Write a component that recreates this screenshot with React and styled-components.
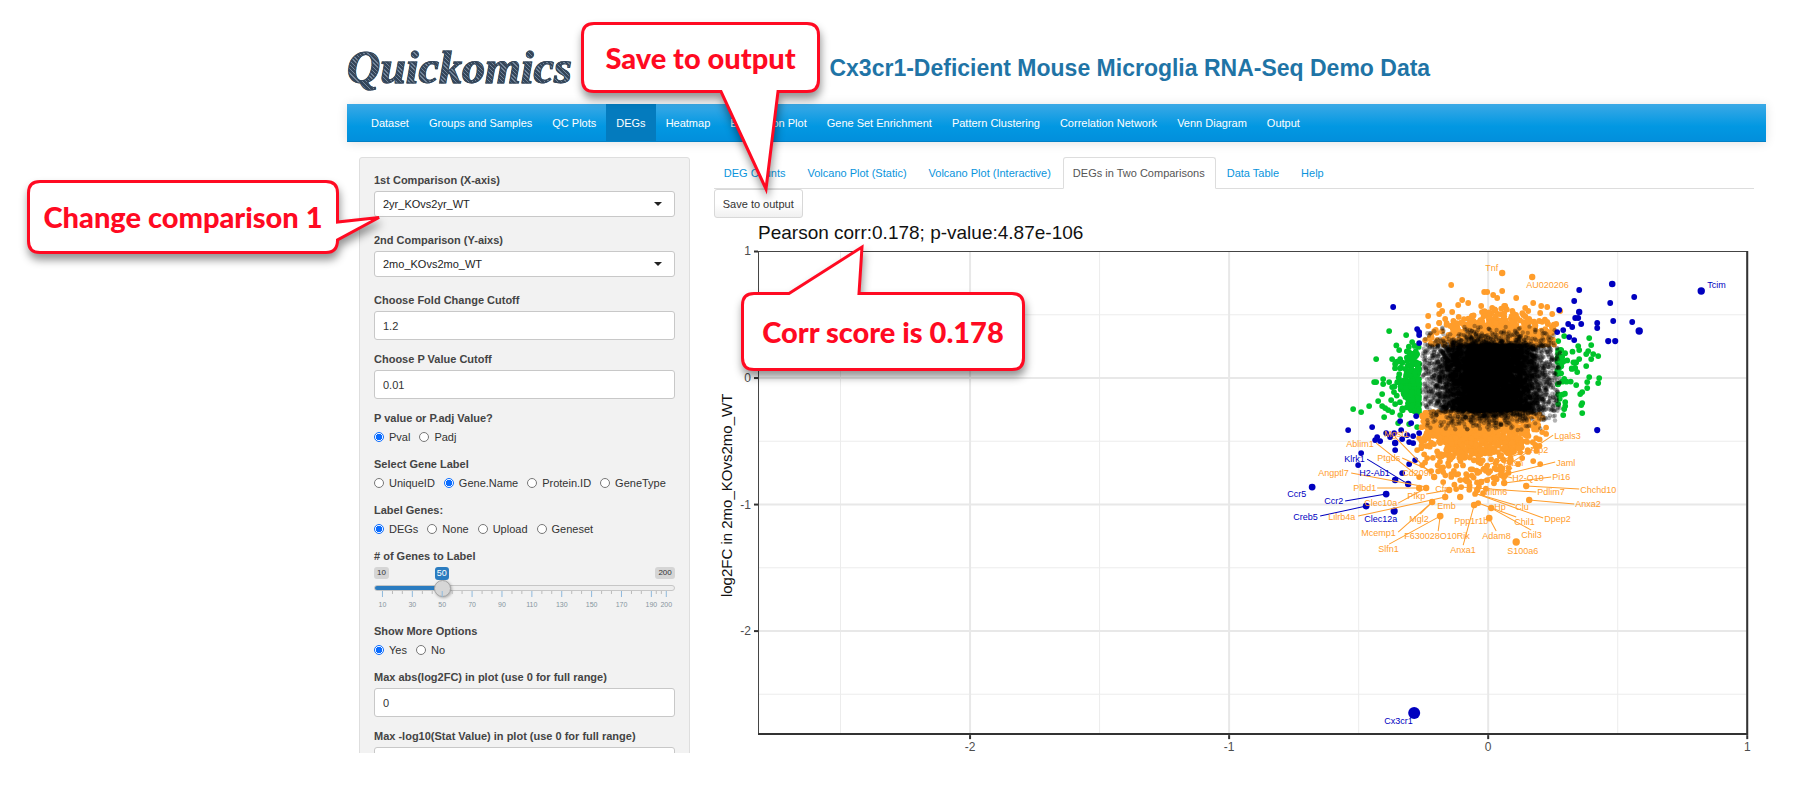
import React, { useState } from "react";
import styled, { createGlobalStyle, css } from "styled-components";

const Global = createGlobalStyle`
  *, *::before, *::after { box-sizing: border-box; }
  body {
    margin: 0;
    background: #fff;
    color: #333;
    font: 11px/16px "Liberation Sans", Arial, sans-serif;
  }
  button, input, select { font: inherit; color: inherit; margin: 0; }
`;

const Page = styled.div`
  position: relative;
`;

const AppFrame = styled.div`
  height: calc(100vh - 39px);
  overflow: hidden;
  padding: 0 28px 0 347px;
`;

const Header = styled.header`
  display: grid;
  grid-template-columns: 34fr 66fr;
  align-items: center;
  height: 104px;
  padding-top: 32px;
`;

const Logo = styled.div`
  font: italic 700 46px/72px "Liberation Serif", "Times New Roman", serif;
  color: transparent;
  background: repeating-linear-gradient(45deg, #34465a 0 2px, #75869a 2px 3px);
  background-clip: text;
  -webkit-background-clip: text;
  -webkit-text-stroke: 1px #34465a;
  justify-self: start;
  padding-bottom: 4px;
`;

const Title = styled.h1`
  margin: 0;
  padding-bottom: 4px;
  font-size: 23px;
  line-height: 32px;
  color: #1f74a6;
  white-space: nowrap;
`;

const NavBar = styled.nav`
  display: flex;
  height: 38px;
  padding-left: 14px;
  background: linear-gradient(#3ba9e6, #0298e2 60%, #028fdc);
  border-bottom: 1px solid #0281c6;
  box-shadow: 0 1px 10px rgba(0, 0, 0, 0.12);
`;

const NavLink = styled.a`
  padding: 11px 10px;
  color: #fff;
  text-decoration: none;
  white-space: nowrap;
  background: ${(p) => (p.$active ? "#047bbe" : "none")};
`;

const Body = styled.div`
  display: grid;
  grid-template-columns: 1fr 3fr;
  margin-top: 15px;
`;

const Column = styled.div`
  padding: 0 12px;
  min-width: 0;
`;

const Well = styled.form`
  padding: 14px;
  background: #f2f2f2;
  border: 1px solid #dedede;
  border-radius: 3px;
`;

const Field = styled.div`
  margin-bottom: ${(p) => p.$gap || 11}px;
`;

const labelText = css`
  display: block;
  padding: 0;
  font-weight: 700;
  line-height: 16px;
  color: #444;
`;

const Label = styled.label`
  ${labelText}
  margin-bottom: 3px;
`;

const Legend = styled.legend`
  ${labelText}
`;

const boxLook = css`
  display: block;
  width: 100%;
  background: #fff;
  border: 1px solid #c8c8c8;
  border-radius: 3px;
  padding: 0 8px;
`;

const TextInput = styled.input`
  ${boxLook}
  height: 29px;
`;

const SelectBox = styled.div`
  position: relative;
  &::after {
    content: "";
    position: absolute;
    right: 13px;
    top: 11px;
    border: 4px solid transparent;
    border-top-color: #222;
    border-bottom: 0;
    pointer-events: none;
  }
`;

const Select = styled.select`
  ${boxLook}
  height: 26px;
  appearance: none;
  color: #222;
`;

const RadioSet = styled.fieldset`
  border: 0;
  margin: 0 0 8px;
  padding: 0;
`;

const RadioRow = styled.div`
  display: flex;
  align-items: center;
  gap: 9px;
  height: 22px;
`;

const RadioLabel = styled.label`
  display: flex;
  align-items: center;
  gap: 5px;
  white-space: nowrap;
`;

const Radio = styled.input`
  appearance: none;
  width: 10px;
  height: 10px;
  border: 1px solid #777;
  border-radius: 50%;
  background: #fff;
  &:checked {
    border-color: #0a6cff;
    background: radial-gradient(circle, #0a6cff 0 3px, #fff 3px);
  }
`;

const SliderField = styled.div`
  height: 75px;
`;

const Bubbles = styled.div`
  position: relative;
  display: flex;
  justify-content: space-between;
  height: 18px;
`;

const Bubble = styled.span`
  height: 12px;
  padding: 0 3px;
  border-radius: 3px;
  background: #d5d5d5;
  font-size: 8px;
  line-height: 12px;
`;

const ValueBubble = styled.output`
  position: absolute;
  top: 0;
  height: 13px;
  padding: 0 2px;
  transform: translateX(-50%);
  border-radius: 3px;
  background: #2b7cc0;
  color: #fff;
  font-size: 9px;
  line-height: 13px;
`;

const Range = styled.input`
  display: block;
  appearance: none;
  width: 100%;
  height: 6px;
  border: 1px solid #c6c6c6;
  border-radius: 4px;
  &::-webkit-slider-thumb {
    appearance: none;
    width: 17px;
    height: 17px;
    border: 1px solid #a5a5a5;
    border-radius: 50%;
    background: #d6d6d6;
    box-shadow: 1px 1px 3px rgba(0, 0, 0, 0.3);
  }
`;

const Ticks = styled.svg`
  display: block;
  width: 100%;
  height: 6px;
`;

const TickLabels = styled.div`
  display: grid;
  grid-template-columns: repeat(20, 1fr);
  margin: 0 1px;
  font-size: 7px;
  line-height: 16px;
  color: #8595a0;
`;

const TickLabel = styled.span`
  grid-column: ${(p) => p.$col};
  justify-self: center;
`;

const TabBar = styled.div`
  display: flex;
  height: 32px;
  border-bottom: 1px solid #ddd;
`;

const Tab = styled.a`
  height: 32px;
  margin-right: 1px;
  padding: 7px 10px 7px 9px;
  border: 1px solid transparent;
  border-radius: 3px 3px 0 0;
  color: #0a94dc;
  text-decoration: none;
  white-space: nowrap;
  ${(p) =>
    p.$active &&
    css`
      color: #555;
      background: #fff;
      border-color: #ddd #ddd #fff;
    `}
`;

const SaveButton = styled.button`
  display: block;
  height: 29px;
  padding: 0 8px;
  border: 1px solid #d8d8d8;
  border-radius: 3px;
  background: linear-gradient(#fff, #fff 50%, #f0f0f0);
`;

const Plot = styled.svg`
  display: block;
  width: 100%;
  font-family: "Liberation Sans", Arial, sans-serif;
`;

const CalloutBox = styled.div`
  position: absolute;
  left: ${(p) => p.$x}px;
  top: ${(p) => p.$y}px;
  width: ${(p) => p.$w}px;
  height: ${(p) => p.$h}px;
  display: flex;
  align-items: center;
  justify-content: center;
  font: 900 29px/36px Lato, Carlito, Calibri, sans-serif;
  color: #ff0a22;
  white-space: nowrap;
  pointer-events: none;
`;

const CalloutShape = styled.svg`
  position: absolute;
  inset: 0;
  overflow: visible;
  filter: drop-shadow(1px 6px 4px rgba(0, 0, 0, 0.42));
`;

const CalloutText = styled.span`
  position: relative;
`;

const NAV = ["Dataset", "Groups and Samples", "QC Plots", "DEGs", "Heatmap", "Expression Plot",
  "Gene Set Enrichment", "Pattern Clustering", "Correlation Network", "Venn Diagram", "Output"];

const TABS = ["DEG Counts", "Volcano Plot (Static)", "Volcano Plot (Interactive)",
  "DEGs in Two Comparisons", "Data Table", "Help"];

function SelectField({ id, label, value }) {
  return (
    <Field $gap={15}>
      <Label htmlFor={id}>{label}</Label>
      <SelectBox>
        <Select id={id} defaultValue={value}>
          <option>{value}</option>
        </Select>
      </SelectBox>
    </Field>
  );
}

function TextField({ id, label, value }) {
  return (
    <Field>
      <Label htmlFor={id}>{label}</Label>
      <TextInput id={id} type="text" defaultValue={value} />
    </Field>
  );
}

function RadioField({ name, label, options, value }) {
  return (
    <RadioSet>
      <Legend>{label}</Legend>
      <RadioRow>
        {options.map((o) => (
          <RadioLabel key={o}>
            <Radio type="radio" name={name} value={o} defaultChecked={o === value} />
            {o}
          </RadioLabel>
        ))}
      </RadioRow>
    </RadioSet>
  );
}

const MAJOR = [10, 30, 50, 70, 90, 110, 130, 150, 170, 190, 200];
const MINOR = [];
for (let v = 10; v < 190; v += 20) MINOR.push(v + 6.7, v + 13.3);
MINOR.push(193.3, 196.7);
const tickX = (v) => 8.5 + ((v - 10) / 190) * 285;

function GeneSlider() {
  const [value, setValue] = useState(50);
  const part = (value - 10) / 190;
  const at = `calc(8px + (100% - 17px) * ${part})`;
  return (
    <SliderField>
      <Label htmlFor="genes"># of Genes to Label</Label>
      <Bubbles>
        <Bubble>10</Bubble>
        <ValueBubble htmlFor="genes" style={{ left: at }}>{value}</ValueBubble>
        <Bubble>200</Bubble>
      </Bubbles>
      <Range
        id="genes"
        type="range"
        min="10"
        max="200"
        value={value}
        onChange={(e) => setValue(Number(e.target.value))}
        style={{ background: `linear-gradient(90deg, #2b7cc0 ${at}, #eee ${at})` }}
      />
      <Ticks viewBox="0 0 302 6" preserveAspectRatio="none" aria-hidden="true">
        {MAJOR.map((v) => <path key={v} d={`M${tickX(v)} 0v6`} stroke="#8fb9dc" />)}
        {MINOR.map((v) => <path key={v} d={`M${tickX(v)} 0v3`} stroke="#bbb" />)}
      </Ticks>
      <TickLabels>
        {MAJOR.map((v) => <TickLabel key={v} $col={v / 10}>{v}</TickLabel>)}
      </TickLabels>
    </SliderField>
  );
}

const ORANGE = "#ff9d2b";
const BLUE = "#0000bf";
const GREEN = "#00c52b";

/* Repeatable random numbers, so that the cloud is the same on each render. */
let seed = 20240607;
const rnd = () => {
  seed = (seed * 1664525 + 1013904223) % 4294967296;
  return seed / 4294967296;
};
const gauss = () => Math.sqrt(-2 * Math.log(1 - rnd())) * Math.cos(2 * Math.PI * rnd());
const expo = (m) => -m * Math.log(1 - rnd());

const BLUE_DOTS = [
  [1612, 284, 3.3], [1579, 290], [1574, 301], [1610, 303], [1634, 297], [1701, 291, 3.7], [1559, 310],
  [1579, 312, 3.2], [1575, 318], [1578, 318], [1597, 323], [1597, 328], [1613, 321], [1632, 322],
  [1639, 331, 3.7], [1581, 324], [1568, 324], [1572, 327], [1563, 330], [1557, 332], [1569, 337],
  [1574, 340], [1608, 341, 3.1], [1615, 341, 3.1], [1597, 430, 3.1], [1393, 307], [1417, 329],
  [1419, 335], [1419, 343], [1419, 332], [1348, 430], [1372, 427], [1377, 437], [1375, 440],
  [1380, 441], [1386, 433], [1390, 437], [1395, 443, 3.2], [1395, 450], [1394, 433], [1402, 439],
  [1400, 421], [1411, 423], [1416, 416], [1419, 433], [1413, 443], [1409, 442], [1407, 435],
  [1401, 430], [1413, 436], [1415, 460], [1409, 464], [1361, 453], [1358, 465], [1402, 473],
  [1395, 480, 3.2], [1408, 484, 3.2], [1312, 487, 3.4], [1386, 494, 3.4], [1366, 506, 3.4],
  [1394, 511, 3.6], [1414, 713, 6],
];

const GREEN_DOTS = [
  [1589, 338], [1591, 345], [1578, 346], [1579, 350], [1588, 351], [1586, 354], [1593, 354], [1598, 356],
  [1591, 359], [1579, 359], [1586, 366], [1575, 368], [1577, 372], [1589, 377], [1599, 378], [1598, 383],
  [1587, 382], [1587, 388], [1576, 385], [1582, 392], [1580, 394], [1582, 403], [1581, 405], [1582, 413],
  [1565, 402], [1565, 406], [1564, 409], [1563, 415], [1558, 404], [1564, 336], [1558, 341],
  [1389, 331], [1406, 335], [1412, 342], [1399, 350], [1376, 359], [1392, 359], [1400, 359], [1395, 364],
  [1383, 379], [1374, 382], [1376, 382], [1383, 384], [1382, 394], [1378, 401], [1369, 406], [1361, 412],
  [1353, 409], [1384, 417], [1382, 406], [1385, 408], [1388, 410], [1392, 412], [1391, 400], [1395, 404],
  [1402, 410], [1400, 415], [1398, 423], [1409, 424], [1417, 427], [1389, 382], [1392, 387],
];
for (let i = 0; i < 220; i++) {
  const y = 382 + gauss() * 17;
  const d = expo(9);
  if (y > 345 && y < 414 && d < 29) GREEN_DOTS.push([1419 - d, y]);
}
for (let i = 0; i < 60; i++) {
  const y = 368 + gauss() * 17;
  const d = expo(8);
  if (y > 345 && y < 400 && d < 22) GREEN_DOTS.push([1557 + d, y]);
}

const ORANGE_DOTS = [
  [1451, 285], [1502, 273, 3.2], [1502, 291], [1484, 292], [1487, 292], [1493, 295], [1497, 298],
  [1462, 300], [1458, 305], [1439, 305], [1481, 306], [1505, 306], [1468, 303], [1492, 308], [1442, 311],
  [1439, 314], [1452, 312], [1428, 316], [1445, 319], [1428, 326], [1439, 323], [1434, 331], [1431, 335],
  [1443, 342], [1425, 340], [1433, 344], [1532, 277, 3.2], [1516, 298], [1533, 303], [1541, 306],
  [1547, 307], [1525, 308], [1528, 311], [1540, 313], [1552, 314], [1560, 311], [1529, 319], [1539, 321],
  [1547, 322], [1556, 324], [1545, 329], [1504, 306], [1538, 420], [1538, 425], [1542, 432], [1536, 438],
  [1526, 441], [1527, 430], [1516, 443], [1522, 458], [1533, 461], [1540, 464], [1501, 455], [1511, 453],
  [1526, 486, 3.2], [1529, 500, 3.2], [1491, 508, 3.2], [1489, 518, 3.4], [1516, 542, 3.7], [1504, 483, 3.2],
  [1501, 475, 3.2], [1478, 503], [1474, 505, 3.3], [1490, 471], [1481, 482, 3.2], [1477, 490, 3.2],
  [1460, 497, 3.2], [1419, 488, 3.2], [1426, 488, 3.2], [1432, 502, 3.2], [1440, 516, 3.4], [1419, 477],
  [1422, 465], [1431, 471], [1434, 477, 3.2], [1443, 482], [1448, 463], [1427, 458], [1440, 443],
  [1439, 456], [1426, 446], [1419, 438], [1430, 428], [1449, 490, 3.2], [1445, 497, 3.2], [1443, 472],
  [1417, 450], [1461, 487], [1458, 474], [1460, 480], [1456, 489], [1466, 474],
];
for (let i = 0; i < 950; i++) {
  const x = 1498 + gauss() * 26;
  const y = 345 - expo(10);
  const roof = 304 + Math.abs(x - 1500) * 0.3;
  if (x > 1424 && x < 1554 && y > roof) ORANGE_DOTS.push([x, y]);
}
for (let i = 0; i < 1350; i++) {
  const x = 1477 + gauss() * 28;
  const y = 412 + expo(18);
  const floor = 500 - Math.abs(x - 1474) * 0.75;
  if (x > 1421 && x < 1546 && y < floor) ORANGE_DOTS.push([x, y]);
}

const BLACK_DOTS = [];
while (BLACK_DOTS.length < 8500) {
  const x = 1490 + gauss() * 27;
  const y = 345 + rnd() * 66;
  if (x > 1422 && x < 1560) BLACK_DOTS.push([x, y]);
}
for (let i = 0; i < 750; i++) {
  const up = rnd() < 0.5;
  const x = (up ? 1492 : 1486) + gauss() * 32;
  const d = expo(7);
  if (x > 1422 && x < 1556 && d < 19) BLACK_DOTS.push([x, up ? 345 - d : 411 + d]);
}

/* Each gene: name, colour, text start x, baseline y, then the leader line if there is one. */
const GENES = [
  ["Tnf", ORANGE, 1485, 271], ["AU020206", ORANGE, 1526, 288], ["Tcim", BLUE, 1707, 288],
  ["Cx3cr1", BLUE, 1384, 724], ["Ccr5", BLUE, 1287, 497],
  ["Ccr2", BLUE, 1324, 504, [1345, 501, 1386, 494]],
  ["Creb5", BLUE, 1293, 520, [1320, 516, 1366, 506]],
  ["Klrk1", BLUE, 1344, 462, [1367, 459, 1408, 484]],
  ["H2-Ab1", BLUE, 1359, 476], ["Clec12a", BLUE, 1364, 522],
  ["Mgst1", ORANGE, 1384, 437, [1395, 437, 1434, 477]],
  ["Ablim1", ORANGE, 1346, 447, [1376, 443, 1419, 477]],
  ["Ptgds", ORANGE, 1377, 461, [1402, 458, 1431, 471]],
  ["Angptl7", ORANGE, 1318, 476, [1351, 473, 1426, 487]],
  ["Plbd1", ORANGE, 1353, 491, [1377, 488, 1419, 488]],
  ["Cd209f", ORANGE, 1402, 476],
  ["Clec10a", ORANGE, 1364, 506, [1398, 503, 1426, 488]],
  ["Lilrb4a", ORANGE, 1328, 520, [1358, 516, 1445, 497]],
  ["Pfkp", ORANGE, 1407, 499, [1426, 494, 1449, 490]],
  ["Mgl2", ORANGE, 1409, 522, [1420, 514, 1432, 502]],
  ["Mcemp1", ORANGE, 1361, 536, [1398, 532, 1432, 502]],
  ["F630028O10Rik", ORANGE, 1404, 539, [1438, 531, 1440, 516]],
  ["Slfn1", ORANGE, 1378, 552, [1389, 544, 1440, 516]],
  ["Emb", ORANGE, 1437, 509], ["Cfp", ORANGE, 1435, 492],
  ["Ppp1r1b", ORANGE, 1454, 524],
  ["Anxa1", ORANGE, 1450, 553, [1463, 545, 1474, 505]],
  ["Lgals3", ORANGE, 1554, 439, [1553, 435, 1503, 468]],
  ["Plp2", ORANGE, 1530, 453, [1530, 450, 1482, 467]],
  ["Jaml", ORANGE, 1556, 466, [1555, 462, 1481, 480]],
  ["Fasn", ORANGE, 1503, 466, [1512, 468, 1474, 484]],
  ["H2-Q10", ORANGE, 1512, 481, [1512, 478, 1501, 475]],
  ["Pi16", ORANGE, 1552, 480, [1551, 477, 1504, 483]],
  ["Chchd10", ORANGE, 1580, 493, [1579, 489, 1526, 486]],
  ["Pdlim7", ORANGE, 1537, 495, [1536, 492, 1460, 487]],
  ["Ifitm6", ORANGE, 1485, 495],
  ["Anxa2", ORANGE, 1575, 507, [1574, 504, 1529, 500]],
  ["Hp", ORANGE, 1494, 510],
  ["Clu", ORANGE, 1515, 510, [1515, 505, 1477, 494]],
  ["Dpep2", ORANGE, 1544, 522, [1543, 518, 1477, 494]],
  ["Chil1", ORANGE, 1514, 525, [1516, 517, 1478, 503]],
  ["Chil3", ORANGE, 1521, 538, [1531, 530, 1491, 508]],
  ["Adam8", ORANGE, 1482, 539, [1496, 531, 1489, 518]],
  ["S100a6", ORANGE, 1507, 554],
];

const sx = (v) => 1488 + v * 259;
const sy = (v) => 378 - v * 126.5;

const Dots = React.memo(function Dots({ data, fill, opacity = 1, r = 2.9 }) {
  return (
    <g fill={fill} fillOpacity={opacity}>
      {data.map(([x, y, own], i) => (
        <circle key={i} cx={x.toFixed(1)} cy={y.toFixed(1)} r={own || r} />
      ))}
    </g>
  );
});

function ScatterPlot() {
  return (
    <Plot viewBox="714 218 1040 536" role="img" aria-label="DEGs in two comparisons">
      <text x="758" y="239" fontSize="19" fill="#111">Pearson corr:0.178; p-value:4.87e-106</text>
      <text transform="translate(732 597) rotate(-90)" fontSize="15" fill="#111">log2FC in 2mo_KOvs2mo_WT</text>
      <g stroke="#ececec">
        {[-2.5, -1.5, -0.5, 0.5].map((v) => <path key={v} d={`M${sx(v)} 252V734`} />)}
        {[0.5, -0.5, -1.5, -2.5].map((v) => <path key={v} d={`M759 ${sy(v)}H1746`} />)}
      </g>
      <g stroke="#e8e8e8" strokeWidth="2">
        {[-2, -1, 0].map((v) => <path key={v} d={`M${sx(v)} 252V734`} />)}
        {[0, -1, -2].map((v) => <path key={v} d={`M759 ${sy(v)}H1746`} />)}
      </g>
      <Dots data={GREEN_DOTS} fill={GREEN} />
      <Dots data={ORANGE_DOTS} fill={ORANGE} />
      <Dots data={BLUE_DOTS} fill={BLUE} />
      <Dots data={BLACK_DOTS} fill="#000" opacity={0.3} r={2.2} />
      <g strokeWidth="1">
        {GENES.filter((g) => g[4]).map(([name, color, , , l]) => (
          <path key={name} d={`M${l[0]} ${l[1]}L${l[2]} ${l[3]}`} stroke={color} />
        ))}
      </g>
      <g fontSize="9">
        {GENES.map(([name, color, x, y]) => <text key={name} x={x} y={y} fill={color}>{name}</text>)}
      </g>
      <path d="M758.500 251.500H1747V734H758.500Z" fill="none" stroke="#444" strokeWidth="1" />
      <path d="M758 734H1747V251" fill="none" stroke="#333" strokeWidth="2" />
      <g stroke="#333" strokeWidth="2">
        {[1, 0, -1, -2].map((v) => <path key={v} d={`M754 ${sy(v)}h4`} />)}
        {[-2, -1, 0, 1].map((v) => <path key={v} d={`M${sx(v)} 735v4`} />)}
      </g>
      <g fontSize="12" fill="#4d4d4d">
        {[1, 0, -1, -2].map((v) => <text key={v} x="751" y={sy(v) + 4} textAnchor="end">{v}</text>)}
        {[-2, -1, 0, 1].map((v) => <text key={v} x={sx(v)} y="751" textAnchor="middle">{v}</text>)}
      </g>
    </Plot>
  );
}

function Callout({ x, y, w, h, path, children }) {
  return (
    <CalloutBox $x={x} $y={y} $w={w} $h={h}>
      <CalloutShape width={w} height={h} aria-hidden="true">
        <path d={path} fill="#fff" stroke="#ff0a22" strokeWidth="3" />
      </CalloutShape>
      <CalloutText>{children}</CalloutText>
    </CalloutBox>
  );
}

export default function App() {
  return (
    <Page>
      <Global />
      <AppFrame>
        <Header>
          <Logo>Quickomics</Logo>
          <Title>Cx3cr1-Deficient Mouse Microglia RNA-Seq Demo Data</Title>
        </Header>
        <NavBar>
          {NAV.map((n) => <NavLink key={n} href="#" $active={n === "DEGs"}>{n}</NavLink>)}
        </NavBar>
        <Body>
          <Column>
            <Well>
              <SelectField id="cmp1" label="1st Comparison (X-axis)" value="2yr_KOvs2yr_WT" />
              <SelectField id="cmp2" label="2nd Comparison (Y-aixs)" value="2mo_KOvs2mo_WT" />
              <TextField id="fc" label="Choose Fold Change Cutoff" value="1.2" />
              <TextField id="pv" label="Choose P Value Cutoff" value="0.01" />
              <RadioField name="ptype" label="P value or P.adj Value?" options={["Pval", "Padj"]} value="Pval" />
              <RadioField name="glabel" label="Select Gene Label" value="Gene.Name"
                options={["UniqueID", "Gene.Name", "Protein.ID", "GeneType"]} />
              <RadioField name="lgenes" label="Label Genes:" value="DEGs"
                options={["DEGs", "None", "Upload", "Geneset"]} />
              <GeneSlider />
              <RadioField name="more" label="Show More Options" options={["Yes", "No"]} value="Yes" />
              <TextField id="maxfc" label="Max abs(log2FC) in plot (use 0 for full range)" value="0" />
              <TextField id="maxstat" label="Max -log10(Stat Value) in plot (use 0 for full range)" value="" />
            </Well>
          </Column>
          <Column>
            <TabBar>
              {TABS.map((t) => (
                <Tab key={t} href="#" $active={t === "DEGs in Two Comparisons"}>{t}</Tab>
              ))}
            </TabBar>
            <SaveButton type="button">Save to output</SaveButton>
            <ScatterPlot />
          </Column>
        </Body>
      </AppFrame>
      <Callout x={27} y={180} w={312} h={74}
        path="M13 1.500H299Q310.500 1.500 310.500 13V42L352 37.500L310.500 60Q310.500 72.500 299 72.500H13Q1.500 72.500 1.500 61V13Q1.500 1.500 13 1.500Z">
        Change comparison 1
      </Callout>
      <Callout x={581} y={22} w={239} h={71}
        path="M13 1.500H226Q237.500 1.500 237.500 13V58Q237.500 69.500 226 69.500H197L185 167L140 69.500H13Q1.500 69.500 1.500 58V13Q1.500 1.500 13 1.500Z">
        Save to output
      </Callout>
      <Callout x={741} y={292} w={284} h={79}
        path="M13 1.500H48L121 -45L118 1.500H271Q282.500 1.500 282.500 13V66Q282.500 77.500 271 77.500H13Q1.500 77.500 1.500 66V13Q1.500 1.500 13 1.500Z">
        Corr score is 0.178
      </Callout>
    </Page>
  );
}
